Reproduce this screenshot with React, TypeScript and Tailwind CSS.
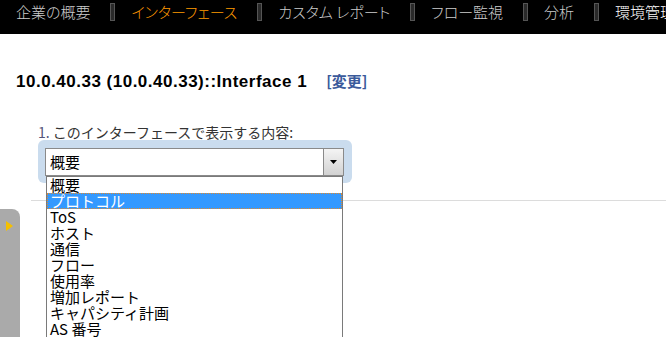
import React from 'react';

const navItems = ['企業の概要', 'インターフェース', 'カスタム レポート', 'フロー監視', '分析', '環境管理'];

const options = ['概要', 'プロトコル', 'ToS', 'ホスト', '通信', 'フロー', '使用率', '増加レポート', 'キャパシティ計画', 'AS 番号'];

const jp = "font-['Noto_Sans_CJK_JP',sans-serif]";

const Separator = () => (
  <span className="ml-[20px] mr-[16px] mt-[3px] h-[18px] w-[5px] shrink-0 border border-[#555] bg-[#2a2a2a]" />
);

export default function App() {
  const selected = 1;

  return (
    <div className="relative h-[337px] w-[666px] overflow-hidden bg-white font-['Liberation_Sans',sans-serif]">
      {/* top navigation */}
      <nav className={`flex h-[34px] items-start whitespace-nowrap bg-black pl-[16px] text-[15px] font-light leading-[24px] ${jp} [font-feature-settings:'palt']`}>
        {navItems.map((item, i) => (
          <React.Fragment key={item}>
            {i > 0 && <Separator />}
            <a
              className={
                i === 1 ? 'text-[#ff9900]' : i === navItems.length - 1 ? 'text-white' : 'text-[#cccccc]'
              }
            >
              {item}
            </a>
          </React.Fragment>
        ))}
      </nav>

      <div className="pt-[37px]">
        <h1 className="ml-[16px] flex items-baseline text-[17px] font-bold leading-[19px] tracking-[0.5px] text-black">
          10.0.40.33 (10.0.40.33)::Interface 1
          <a className={`ml-[19px] text-[15px] tracking-normal text-[#3a5a9b] ${jp}`}>[変更]</a>
        </h1>

        <div className="ml-[38px] mt-[34px]">
          <p className={`text-[14px] leading-[15px] text-[#333] ${jp}`}>
            <span className="text-[#55557a]">1. </span>このインターフェースで表示する内容:
          </p>
          <div className="w-[314px] rounded-[6px] bg-[#cadcee] pb-[7px] pl-[7px] pt-[8px]">
            <div className="flex h-[28px] w-[299px] border border-[#8a8a8a] bg-white">
              <span className={`flex-1 pl-[4px] text-[15px] leading-[26px] text-black ${jp}`}>概要</span>
              <span className="flex h-[26px] w-[20px] items-center justify-center border-l border-[#8a8a8a] bg-gradient-to-b from-[#f4f4f4] to-[#d2d2d2]">
                <svg width="7" height="4" viewBox="0 0 7 4">
                  <polygon points="0,0 7,0 3.5,4" fill="#000" />
                </svg>
              </span>
            </div>
          </div>
        </div>

        <hr className="ml-[31px] mt-[17px] border-t border-[#dcdcdc]" />
      </div>

      {/* opened option list */}
      <ul className={`absolute left-[46px] top-[176px] w-[297px] border border-[#7a7a7a] bg-white text-[15px] leading-[16px] text-black ${jp}`}>
        {options.map((o, i) => (
          <li
            key={o}
            className={
              i === selected
                ? 'h-[16px] border border-dotted border-[#e0892c] bg-[#3399ff] pl-[2px] leading-[14px] text-white'
                : 'h-[16px] pl-[3px]'
            }
          >
            {o}
          </li>
        ))}
      </ul>

      {/* side panel tab */}
      <div className="absolute left-0 top-[209px] h-[130px] w-[20px] rounded-tr-[8px] bg-[#aaaaaa] pl-[6px] pt-[12px]">
        <svg width="7" height="10" viewBox="0 0 7 10">
          <polygon points="0,0 7,5 0,10" fill="#f5c000" />
        </svg>
      </div>
    </div>
  );
}
